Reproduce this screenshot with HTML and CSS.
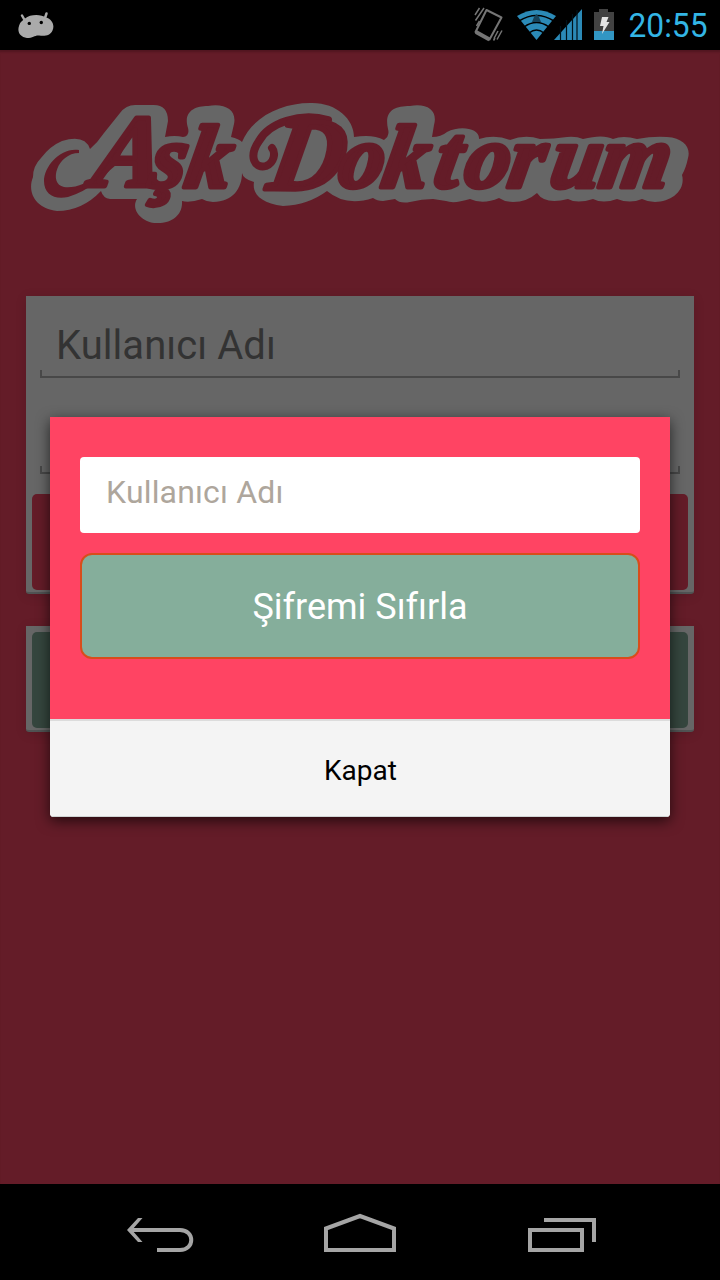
FILE: index.html
```html
<!DOCTYPE html>
<html lang="tr">
<head>
<meta charset="utf-8">
<title>Aşk Doktorum</title>
<link rel="stylesheet" href="styles.css">
</head>
<body>
<div class="phone">
  <header class="status">
    <svg class="droid" width="36" height="30" viewBox="0 0 36 30"><path d="M7 8.500C12 4 23 4 28 7.500C34 9 37 15 34.500 20.500C32 26 27 26 21 25.500C17 25 15 28 9 28C2 27-1 22 1 16C2 12 4 11 7 8.500Z" fill="#aaa"/><path d="M6 9L4 5.500M27 8L28.500 3.500" stroke="#aaa" stroke-width="2.500" stroke-linecap="round"/><circle cx="11.300" cy="13.400" r="1.700"/><circle cx="23.300" cy="12.500" r="1.700"/></svg>
    <div class="status-right">
      <svg width="246" height="50" viewBox="474 0 246 50">
        <g fill="none" stroke="#757575">
          <path d="M486.500 10L501.500 17.500L489.500 39.500L475.500 32Z" stroke-width="2" stroke-linejoin="round"/>
          <path d="M476 32L489.500 39.500" stroke-width="4"/>
          <path d="M475 15L479.500 8M475.500 20.500L484 8M476.500 26L479.500 21M494 38.500L498 31M497 39.500L502 30.500M493.500 40.500L495 38" stroke-width="1.500"/>
        </g>
        <path d="M517 16Q536.500 4 556 16L536.500 40Z" fill="#2b8ab7"/>
        <path d="M519 21Q536.500 10 554 21M524 27Q536.500 18 549 27M529 33Q536.500 27 544 33" fill="none" stroke="#000" stroke-width="1.500"/>
        <path d="M532 22L534 17L536.500 14L539 17L541 22Z" fill="#17445b"/>
        <path d="M554 40L582 9V40Z" fill="#2b8ab7"/>
        <path d="M560.500 26V40M566.500 20V40M572.500 14V40M577 10V40" stroke="#001219" stroke-width="1.200"/>
        <path d="M594 12H599V9H608V12H614V31H594Z" fill="#424242"/><path d="M594 31H614V40H594Z" fill="#3296c3"/>
        <path d="M602 17H608.500L606.500 22H609.500L602 34L603.500 26H600Z" fill="#e5e5e5"/>
        <text class="clock" x="628.500" y="37" textLength="79" lengthAdjust="spacingAndGlyphs">20:55</text>
      </svg>
    </div>
  </header>

  <main class="login">
    <svg class="logo" width="720" height="140" viewBox="0 95 720 140">
      <path class="logo-plate" d="M33 177Q33 166 41 158Q50 146 62 141Q85 134 90 149Q98 142 104 133L120 113Q126 105 135 105H152Q168 104 168 121L165 137Q175 135 183 137Q190 136 188 128C183 112 194 106 208 106C225 103 237 110 234 124L231 137Q239 139 242 142C252 117 282 103 310 103C336 102 354 119 354 137Q373 134 384 140Q390 136 388 129C384 111 394 106 410 106C428 103 438 111 434 125L432 137Q441 137 447 132C460 125 480 128 479 139Q495 134 510 140Q525 134 540 139Q554 139 567 137Q576 136 583 139Q603 134 613 139Q623 135 637 139Q653 136 667 137C684 138 691 148 688 158Q686 168 682 175C686 190 672 202 655 202Q648 202 642 199Q630 204 617 199Q603 204 593 199Q577 204 568 199Q545 205 537 193Q527 202 513 202Q505 202 499 198Q483 205 470 199Q454 204 446 201L433 199Q422 199 410 202Q400 204 395 199L383 201Q377 201 373 198Q346 207 327 191Q308 205 283 206C261 203 252 194 254 182Q243 179 242 173C242 188 233 202 213 202Q207 202 202 199Q190 203 182 201C183 215 172 223 158 223C143 224 130 210 137 199H110Q103 198 101 191Q82 211 57 211C35 208 27 192 33 177Z"/>
      <path class="logo-ink" d="M79 150C61 147 44 166 44 181C44 194 54 200 68 197C89 191 104 175 116 165L137 119L141 116C127 135 116 154 101 171C87 185 75 188 64 187C48 184 57 153 79 153Z"/>
      <path class="logo-swash" d="M328 120C300 112 269 123 259 141C248 157 255 169 266 166C274 163 276 153 272 148"/>
      <g transform="translate(0 187) skewX(-10)">
        <text class="wordmark"><tspan x="90" y="-1" class="cap">A</tspan><tspan x="148 183" y="0">şk</tspan> <tspan x="266" y="2" class="cap">D</tspan><tspan x="336 380 432 462 506 548 597" y="0">oktorum</tspan></text>
      </g>
    </svg>
    <section class="card form">
      <div class="line-input first"><span>Kullanıcı Adı</span></div>
      <div class="line-input second"></div>
      <div class="button red"></div>
    </section>
    <section class="card register"><div class="button green"></div></section>
  </main>

  <nav class="nav">
    <svg width="720" height="96" viewBox="0 1184 720 96" fill="none" stroke="#a5a5a5" stroke-width="4">
      <path d="M138 1218H142.500L132 1230L142.500 1242H138L127 1230Z" fill="#a5a5a5" stroke="none"/><path d="M130 1230H180C195 1230 195 1250 180 1250H157"/>
      <path d="M326 1250V1228.500L360 1216L394 1228.500V1250Z"/>
      <path d="M530 1230H582V1250H530ZM544 1220H594V1242"/>
    </svg>
  </nav>

  <div class="dialog">
    <div class="dialog-body">
      <div class="field">Kullanıcı Adı</div>
      <button class="reset">Şifremi Sıfırla</button>
    </div>
    <button class="close">Kapat</button>
  </div>
</div>
</body>
</html>
```
FILE: styles.css
```css
* { box-sizing: border-box; }
body { margin: 0; font-family: Roboto, sans-serif; }
button { font-family: inherit; margin: 0; padding: 0; }
.phone { position: relative; width: 720px; height: 1280px; display: flex; flex-direction: column; overflow: hidden; background: #641c28; }
.status { height: 50px; display: flex; justify-content: space-between; background: #000; }
.droid { margin: 10px 0 0 18px; }
.status-right, .logo, .nav svg { display: block; }
.clock { font-size: 34px; fill: #33b5e5; }
.login { flex: 1; padding-top: 45px; box-shadow: inset 0 3px 2px -1px #521620; }
.logo-plate { fill: #666; }
.logo-ink { fill: #641c28; }
.logo-swash { fill: none; stroke: #641c28; stroke-width: 8; stroke-linecap: round; }
.wordmark { font: italic bold 89px "Liberation Serif", serif; fill: #641c28; stroke: #641c28; stroke-width: 5; stroke-linejoin: round; }
.cap { font-size: 103px; }
.card { width: 668px; margin: 0 auto; background: #666; border-bottom: 2px solid #505353; border-radius: 0 0 3px 3px; box-shadow: 0 2px 12px rgba(0, 0, 0, .12); }
.form { height: 298px; margin-top: 61px; padding: 0 6px; }
.line-input { position: relative; margin: 0 8px; border-bottom: 2px solid #484848; }
.line-input::after { content: ""; position: absolute; left: 0; right: 0; bottom: 0; height: 6px; border: solid #484848; border-width: 0 2px; }
.line-input span { display: block; padding: 26px 0 0 16px; font-size: 40px; line-height: 47px; color: #333; letter-spacing: .05px; }
.first { height: 82px; }
.second { height: 96px; }
.button { height: 96px; border-radius: 5px; }
.red { margin-top: 20px; background: #641c28; }
.register { height: 106px; margin-top: 32px; padding: 6px; }
.green { background: #35463e; }
.nav { height: 96px; background: #000; }
.dialog { position: absolute; left: 50px; top: 417px; width: 620px; height: 400px; border-radius: 0 0 4px 4px; overflow: hidden; background: #f4f4f4; box-shadow: 0 4px 14px rgba(0, 0, 0, .65); }
.dialog-body { height: 302px; padding: 40px 30px 0; background: #ff4463; }
.field { height: 76px; padding: 0 26px; border-radius: 4px; background: #fff; color: #aea69c; font-size: 32px; line-height: 70px; letter-spacing: .17px; }
.reset { display: block; width: 560px; height: 106px; margin-top: 20px; padding-top: 2px; border: 2px solid #d84d1b; border-radius: 12px; background: #85ae9b; color: #fff; font-size: 36px; }
.close { display: block; width: 100%; height: 98px; padding: 4px 0 0 1px; border: 0; border-top: 2px solid #dcdcdc; border-bottom: 1px solid #cfd4d3; background: #f4f4f4; color: #000; font-size: 28px; }
```
